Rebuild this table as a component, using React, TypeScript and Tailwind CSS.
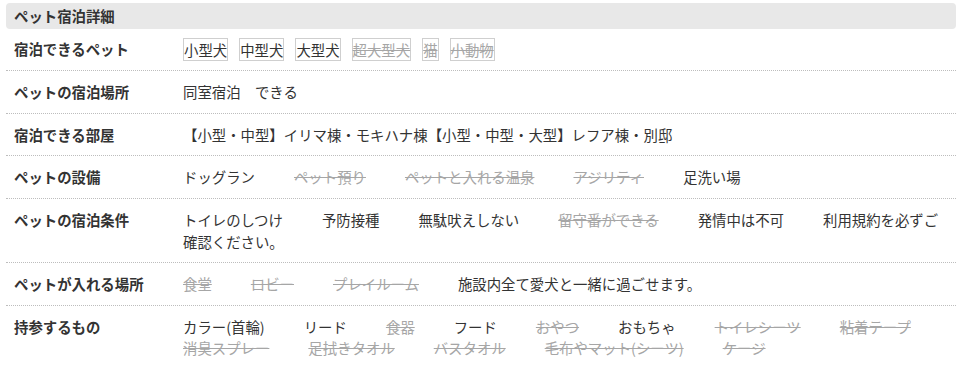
const rows: {
  label: string;
  items?: { t: string; off?: boolean; br?: boolean }[];
  text?: string;
  tags?: boolean;
}[] = [
  {
    label: "宿泊できるペット",
    tags: true,
    items: [
      { t: "小型犬" },
      { t: "中型犬" },
      { t: "大型犬" },
      { t: "超大型犬", off: true },
      { t: "猫", off: true },
      { t: "小動物", off: true },
    ],
  },
  { label: "ペットの宿泊場所", text: "同室宿泊　できる" },
  {
    label: "宿泊できる部屋",
    text: "【小型・中型】イリマ棟・モキハナ棟【小型・中型・大型】レフア棟・別邸",
  },
  {
    label: "ペットの設備",
    items: [
      { t: "ドッグラン" },
      { t: "ペット預り", off: true },
      { t: "ペットと入れる温泉", off: true },
      { t: "アジリティ", off: true },
      { t: "足洗い場" },
    ],
  },
  {
    label: "ペットの宿泊条件",
    items: [
      { t: "トイレのしつけ" },
      { t: "予防接種" },
      { t: "無駄吠えしない" },
      { t: "留守番ができる", off: true },
      { t: "発情中は不可" },
      { t: "利用規約を必ずご" },
      // continuation of the previous item, wraps to the next line
      { t: "確認ください。", br: true },
    ],
  },
  {
    label: "ペットが入れる場所",
    items: [
      { t: "食堂", off: true },
      { t: "ロビー", off: true },
      { t: "プレイルーム", off: true },
      { t: "施設内全て愛犬と一緒に過ごせます。" },
    ],
  },
  {
    label: "持参するもの",
    items: [
      { t: "カラー(首輪)" },
      { t: "リード" },
      { t: "食器", off: true },
      { t: "フード" },
      { t: "おやつ", off: true },
      { t: "おもちゃ" },
      { t: "トイレシーツ", off: true },
      { t: "粘着テープ", off: true },
      { t: "消臭スプレー", off: true },
      { t: "足拭きタオル", off: true },
      { t: "バスタオル", off: true },
      { t: "毛布やマット(シーツ)", off: true },
      { t: "ケージ", off: true },
    ],
  },
];

const off = "text-[#a6a6a6] line-through";

export default function App() {
  return (
    <div className="min-h-[369px] bg-white pl-[6px] pt-[3px] font-['Noto_Sans_CJK_JP',sans-serif] text-[14.4px] leading-[21.6px] text-[#333]">
      <div className="w-[950px]">
        <h2 className="rounded-[4px] bg-[#e8e8e8] py-[2px] pl-[8px] font-bold">
          ペット宿泊詳細
        </h2>
        {rows.map((r) => (
          <div
            key={r.label}
            className={`flex border-b border-dotted border-[#bdbdbd] ${
              r.tags ? "py-[9px]" : "py-[10px]"
            }`}
          >
            <div className="w-[177px] shrink-0 pl-[8px] font-bold">{r.label}</div>

            {r.text && <div className="flex-1 pr-[8px]">{r.text}</div>}

            {r.tags && (
              <div className="flex flex-1 flex-wrap gap-x-[11px]">
                {r.items?.map((it) => (
                  <span
                    key={it.t}
                    className={`border border-[#cfcfcf] ${it.off ? off : ""}`}
                  >
                    {it.t}
                  </span>
                ))}
              </div>
            )}

            {!r.tags && r.items && (
              <div className="flex flex-1 flex-wrap gap-x-[39px] pr-[4px]">
                {r.items.map((it) => (
                  <span
                    key={it.t}
                    className={`${it.br ? "basis-full" : ""} ${it.off ? off : ""}`}
                  >
                    {it.t}
                  </span>
                ))}
              </div>
            )}
          </div>
        ))}
      </div>
    </div>
  );
}
